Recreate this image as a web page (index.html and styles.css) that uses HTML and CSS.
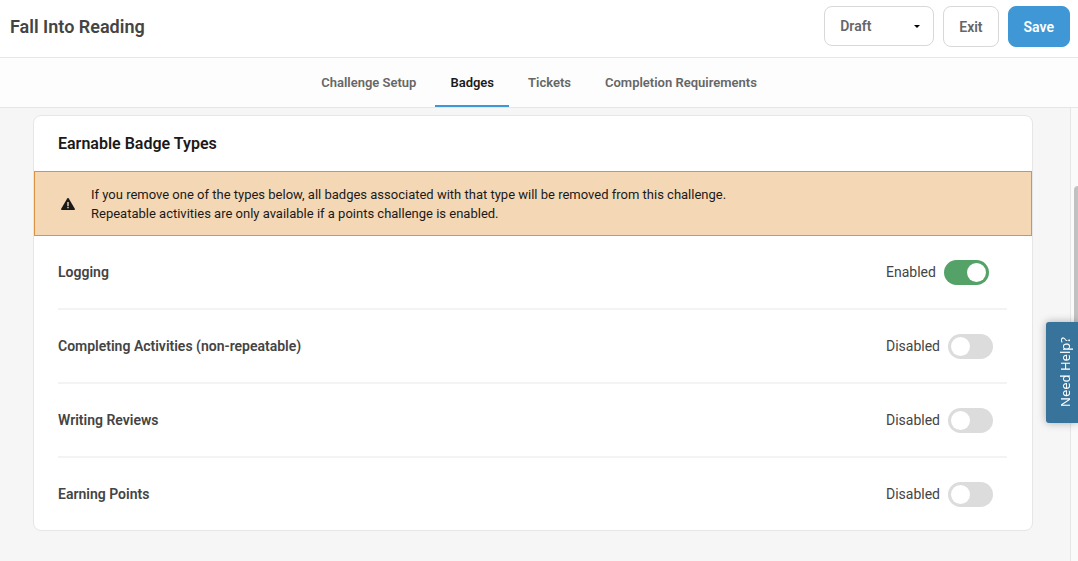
FILE: index.html
```html
<!DOCTYPE html>
<html lang="en">
  <head>
    <meta charset="UTF-8" />
    <meta name="viewport" content="width=device-width, initial-scale=1" />
    <title>Fall Into Reading</title>
    <link rel="stylesheet" href="styles.css">
  </head>
  <body>
    <header class="topbar">
      <h1>Fall Into Reading</h1>
      <div class="actions">
        <div class="status">
          <select name="status" aria-label="Challenge status">
            <option>Draft</option>
            <option>Published</option>
          </select>
          <svg class="caret" viewBox="0 0 6 3" aria-hidden="true">
            <path d="M0 0h6L3 3z" />
          </svg>
        </div>
        <button type="button" class="btn">Exit</button>
        <button type="button" class="btn btn-primary">Save</button>
      </div>
    </header>

    <nav class="tabs">
      <a href="#setup">Challenge Setup</a>
      <a href="#badges" class="active">Badges</a>
      <a href="#tickets">Tickets</a>
      <a href="#requirements">Completion Requirements</a>
    </nav>

    <div class="page">
      <main>
        <section class="card">
          <h2>Earnable Badge Types</h2>

          <div class="warning">
            <svg viewBox="0 0 14 12" aria-hidden="true">
              <path class="warning-shape" d="M6.2.5a1 1 0 0 1 1.6 0l6 10.2a.9.9 0 0 1-.8 1.3H1a.9.9 0 0 1-.8-1.3z" />
              <path class="warning-mark" d="M6.3 4h1.4v4H6.3zM6.3 8.8h1.4v1.4H6.3z" />
            </svg>
            <p>
              If you remove one of the types below, all badges associated with that type will be removed from this challenge.<br />
              Repeatable activities are only available if a points challenge is enabled.
            </p>
          </div>

          <div class="types">
            <div class="type">
              <label for="logging">Logging</label>
              <div class="toggle">
                <span>Enabled</span>
                <input id="logging" type="checkbox" checked />
              </div>
            </div>
            <div class="type">
              <label for="activities">Completing Activities (non-repeatable)</label>
              <div class="toggle">
                <span>Disabled</span>
                <input id="activities" type="checkbox" />
              </div>
            </div>
            <div class="type">
              <label for="reviews">Writing Reviews</label>
              <div class="toggle">
                <span>Disabled</span>
                <input id="reviews" type="checkbox" />
              </div>
            </div>
            <div class="type">
              <label for="points">Earning Points</label>
              <div class="toggle">
                <span>Disabled</span>
                <input id="points" type="checkbox" />
              </div>
            </div>
          </div>
        </section>
      </main>
      <div class="scrollbar">
        <div class="thumb"></div>
      </div>
    </div>

    <button type="button" class="help">Need Help?</button>
  </body>
</html>
```

FILE: styles.css
```css
* {
  box-sizing: border-box;
}

body {
  margin: 0;
  min-height: 100vh;
  display: flex;
  flex-direction: column;
  font-family: Roboto, sans-serif;
  font-size: 14px;
  color: #444;
  background: #f6f6f6;
}

h1,
h2,
p {
  margin: 0;
}

.topbar {
  display: flex;
  justify-content: space-between;
  padding: 6px 8px 10px 10px;
  background: white;
  border-bottom: 1px solid #e6e6e6;
}

h1 {
  font-size: 18px;
  line-height: 41px;
  font-weight: 600;
}

.actions {
  display: flex;
  align-items: flex-start;
  gap: 9px;
}

.status {
  position: relative;
}

.status select {
  appearance: none;
  width: 110px;
  height: 40px;
  padding: 0 15px;
  border: 1px solid #d8d8d8;
  border-radius: 8px;
  background: white;
  color: #666;
  font: 600 14px Roboto, sans-serif;
}

.caret {
  position: absolute;
  top: 19px;
  right: 14px;
  width: 6px;
  height: 3px;
}

.btn {
  height: 41px;
  padding: 0 15px;
  border: 1px solid #d8d8d8;
  border-radius: 8px;
  background: white;
  color: #666;
  font: 600 14px Roboto, sans-serif;
  cursor: pointer;
}

.btn-primary {
  background: #3f97d5;
  border-color: #3f97d5;
  color: white;
}

.tabs {
  display: flex;
  justify-content: center;
  gap: 4px;
  background: #fdfdfd;
  border-bottom: 1px solid #e6e6e6;
}

.tabs a {
  padding: 2px 15px 0;
  border-bottom: 2px solid transparent;
  color: #666;
  font-size: 13px;
  line-height: 45px;
  font-weight: 600;
  text-decoration: none;
}

.tabs .active {
  border-color: #3f97d5;
  color: #1a1a1a;
}

.page {
  flex: 1;
  display: flex;
}

main {
  flex: 1;
  padding: 7px 37px 30px 33px;
}

.card {
  background: white;
  border: 1px solid #e6e6e6;
  border-radius: 8px;
}

h2 {
  padding: 0 24px;
  color: #1a1a1a;
  font-size: 16px;
  line-height: 55px;
  font-weight: 600;
}

.warning {
  display: flex;
  align-items: center;
  gap: 16px;
  padding: 13px 26px 12px;
  background: #f4d7b5;
  border: 1px solid #db9341;
  color: #1a1a1a;
}

.warning svg {
  width: 14px;
  height: 12px;
}

.warning-shape {
  fill: #1a1a1a;
}

.warning-mark {
  fill: #f4d7b5;
}

.warning p {
  font-size: 13px;
  line-height: 19px;
}

.types {
  padding: 0 25px 0 24px;
}

.type {
  display: flex;
  align-items: center;
  justify-content: space-between;
  height: 74px;
  border-bottom: 2px solid #f3f3f3;
}

.type:last-child {
  height: 72px;
  border-bottom: none;
}

.type label {
  font-weight: 600;
}

.toggle {
  display: flex;
  align-items: center;
  gap: 8px;
  width: 121px;
}

.toggle input {
  appearance: none;
  display: flex;
  width: 45px;
  height: 25px;
  margin: 0;
  padding: 3px;
  border-radius: 13px;
  background: #dcdcdc;
  cursor: pointer;
}

.toggle input::before {
  content: "";
  width: 19px;
  height: 19px;
  border-radius: 50%;
  background: white;
}

.toggle input:checked {
  justify-content: flex-end;
  background: #55a268;
}

.scrollbar {
  width: 8px;
  padding: 78px 0 0 3px;
  background: #fafafa;
  border-left: 1px solid #e6e6e6;
}

.thumb {
  height: 200px;
  border-radius: 4px 0 0 4px;
  background: #c1c1c1;
}

/* rotated half a turn so the label reads upwards, its right side is on the left */
.help {
  position: fixed;
  right: 0;
  bottom: 138px;
  width: 32px;
  height: 101px;
  padding: 0 6px 0 0;
  border: none;
  border-radius: 0 3px 3px 0;
  background: #37739a;
  color: white;
  font: 13px "Noto Sans", sans-serif;
  writing-mode: vertical-rl;
  transform: rotate(180deg);
  box-shadow: 0 0 8px rgba(0, 0, 0, 0.3);
  cursor: pointer;
}
```
